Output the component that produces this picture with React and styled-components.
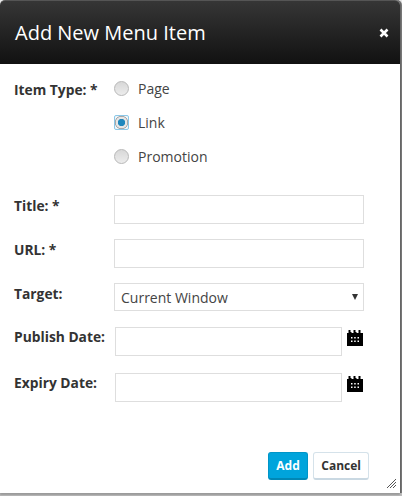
import styled, { createGlobalStyle } from "styled-components";

const GlobalStyle = createGlobalStyle`
  html, body {
    margin: 0;
    padding: 0;
    height: 100%;
    background: #ffffff;
    font-family: "Open Sans", "Liberation Sans", sans-serif;
  }
  * {
    box-sizing: border-box;
  }
`;

const Page = styled.div`
  width: 402px;
  height: 496px;
  overflow: hidden;
  background: linear-gradient(#e9e9e9, #bdbdbd);
`;

const Dialog = styled.div`
  position: relative;
  width: 400px;
  height: 493px;
  background: #fff;
  border-radius: 5px 5px 0 0;
  display: flex;
  flex-direction: column;
  box-shadow: 1px 0 0 #666, 2px 0 0 #777, 0 2px 2px #999;
`;

const Header = styled.div`
  height: 64px;
  padding: 0 11px 0 15px;
  display: flex;
  align-items: center;
  justify-content: space-between;
  background: linear-gradient(#363636, #111111);
  border-radius: 5px 5px 0 0;
  border-top: 1px solid #555;
`;

const Title = styled.h1`
  margin: 0;
  font-size: 20px;
  font-weight: 400;
  color: #fff;
`;

const Close = styled.span`
  display: flex;
  color: #fff;
`;

const Form = styled.form`
  flex: 1;
  display: flex;
  flex-direction: column;
  padding: 0 0 0 14px;
`;

const Row = styled.div`
  display: grid;
  grid-template-columns: ${(props) => props.$labelWidth || "100px"} ${(props) => props.$fieldWidth || "250px"} auto;
  margin-top: ${(props) => props.$top};
`;

const Label = styled.label`
  font-size: 13.8px;
  line-height: 18px;
  font-weight: 700;
  color: #333;
  padding-top: ${(props) => props.$top || "0"};
  white-space: nowrap;
`;

const RadioList = styled.div`
  display: flex;
  flex-direction: column;
  gap: 16px;
  margin-top: -1px;
`;

const RadioRow = styled.div`
  display: flex;
  align-items: center;
  height: 18px;
  gap: 9px;
  font-size: 14px;
  color: #444;
`;

const Radio = styled.span`
  width: 15px;
  height: 15px;
  border-radius: ${(props) => (props.$checked ? "2px" : "50%")};
  border: 1px solid ${(props) => (props.$checked ? "#8cc8e8" : "#b8b8b8")};
  background: ${(props) =>
    props.$checked
      ? "radial-gradient(circle, #1f87bd 0 3.4px, #e6e6e6 3.9px 5.6px, #a9a9a9 6px 6.5px, #eef6fb 6.9px)"
      : "linear-gradient(#d8d8d8, #ececec)"};
`;

const Input = styled.input`
  height: 29px;
  width: 100%;
  padding: 0 6px;
  border: 1px solid #dedede;
  background: #fff;
  outline: none;
  font-family: inherit;
  font-size: 14px;
`;

const SelectBox = styled.div`
  height: 28px;
  padding: 0 6px;
  border: 1px solid #dedede;
  display: flex;
  align-items: center;
  justify-content: space-between;
  font-size: 14px;
  color: #444;
`;

const Caret = styled.span`
  width: 0;
  height: 0;
  margin-right: -1px;
  border-left: 3px solid transparent;
  border-right: 3px solid transparent;
  border-top: 6px solid #333;
`;

const DateIcon = styled.svg`
  width: 16px;
  height: 16px;
  margin: 3px 0 0 5px;
  display: block;
`;

const Actions = styled.div`
  margin-top: auto;
  padding: 0 31px 13px 0;
  display: flex;
  justify-content: flex-end;
  gap: 5px;
`;

const Button = styled.button`
  height: 28px;
  padding: 0 ${(props) => (props.$primary ? "7.5px" : "7px")};
  border-radius: 3px;
  font-family: inherit;
  font-size: 12px;
  font-weight: 700;
  color: ${(props) => (props.$primary ? "#fff" : "#333")};
  background: ${(props) => (props.$primary ? "#00a4dc" : "#fff")};
  border: 1px solid ${(props) => (props.$primary ? "#0095c8" : "#d5e2ea")};
  border-bottom: 2px solid ${(props) => (props.$primary ? "#0087b5" : "#c9d8e2")};
`;

const Grip = styled.svg`
  position: absolute;
  right: 4px;
  bottom: 5px;
  width: 9px;
  height: 9px;
`;

const CalendarIcon = () => (
  <DateIcon viewBox="0 0 16 16">
    <path fill="#000" d="M0 3h1.5V0h2v2h1V3h2V0h2v2h1v1h2V0h2v3H16v13H0z" />
    <path
      fill="#fff"
      d="M4 7h1.5v1.5H4zM7.2 7h1.5v1.5H7.2zM10.5 7H12v1.5h-1.5zM4 10.5h1.5V12H4zM7.2 10.5h1.5V12H7.2zM10.5 10.5H12V12h-1.5z"
    />
  </DateIcon>
);

export default function App() {
  return (
    <Page>
      <GlobalStyle />
      <Dialog>
        <Header>
          <Title>Add New Menu Item</Title>
          <Close>
            <svg width="10" height="10" viewBox="0 0 10 10">
              <path d="M1.5 1.5l7 7M8.5 1.5l-7 7" stroke="#fff" strokeWidth="2.6" />
            </svg>
          </Close>
        </Header>
        <Form>
          <Row $top="16px">
            <Label $top="1px">Item Type: *</Label>
            <RadioList>
              <RadioRow>
                <Radio />
                Page
              </RadioRow>
              <RadioRow>
                <Radio $checked />
                Link
              </RadioRow>
              <RadioRow>
                <Radio />
                Promotion
              </RadioRow>
            </RadioList>
          </Row>
          <Row $top="30px">
            <Label $top="2px">Title: *</Label>
            <Input />
          </Row>
          <Row $top="15px">
            <Label $top="2px">URL: *</Label>
            <Input />
          </Row>
          <Row $top="15px">
            <Label $top="2px">Target:</Label>
            <SelectBox>
              Current Window
              <Caret />
            </SelectBox>
          </Row>
          <Row $top="16px" $labelWidth="101px" $fieldWidth="227px">
            <Label $top="1px">Publish Date:</Label>
            <Input />
            <CalendarIcon />
          </Row>
          <Row $top="17px" $labelWidth="101px" $fieldWidth="227px">
            <Label $top="1px">Expiry Date:</Label>
            <Input />
            <CalendarIcon />
          </Row>
          <Actions>
            <Button type="button" $primary>
              Add
            </Button>
            <Button type="button">Cancel</Button>
          </Actions>
        </Form>
        <Grip viewBox="0 0 9 9">
          <path d="M0 9l9-9M3 9l6-6M6 9l3-3" stroke="#555" strokeWidth="1" />
        </Grip>
      </Dialog>
    </Page>
  );
}
